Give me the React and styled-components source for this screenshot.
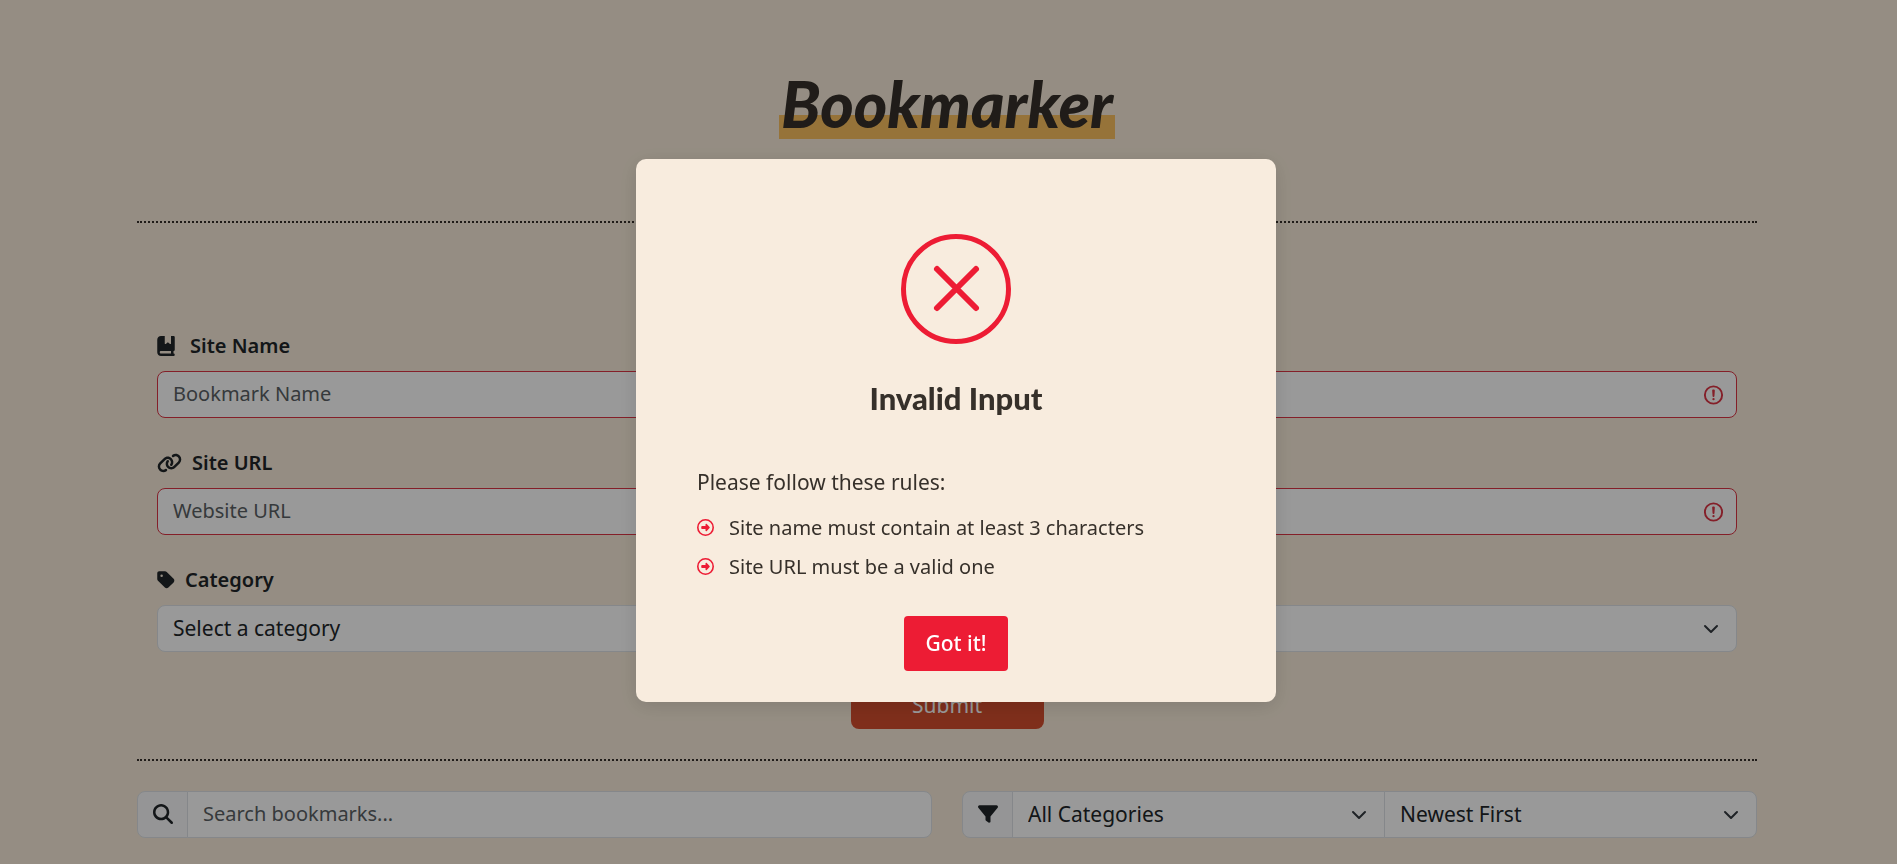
import React from "react";
import styled, { createGlobalStyle } from "styled-components";
import {
  FaBookBookmark,
  FaLink,
  FaTag,
  FaMagnifyingGlass,
  FaFilter,
  FaRegCircleRight,
} from "react-icons/fa6";

const GlobalStyle = createGlobalStyle`
  *, *::before, *::after { box-sizing: border-box; }
  body {
    margin: 0;
    background: #f8ecda;
    color: #212529;
    font-family: "Noto Sans", "Open Sans", sans-serif;
    font-size: 20px;
    line-height: 30px;
  }
  input, select, button { font: inherit; color: inherit; }
`;

const Page = styled.main`
  padding: 63px 140px 24px 137px;
`;

const Header = styled.header`
  display: flex;
  justify-content: center;
  padding-bottom: 82px;
  border-bottom: 2px dotted #36302a;
`;

const Title = styled.h1`
  margin: 0;
  padding: 6px 2px 0;
  font-family: Lato, sans-serif;
  font-size: 64px;
  font-style: italic;
  font-weight: 900;
  line-height: 70px;
  color: #36302a;
  background: linear-gradient(#fbc05f, #fbc05f) bottom / 100% 24px no-repeat;
`;

const Form = styled.form`
  display: flex;
  flex-direction: column;
  gap: 30px;
  padding: 108px 20px 30px;
  border-bottom: 2px dotted #36302a;
`;

const Field = styled.div`
  display: flex;
  flex-direction: column;
  gap: 10px;
`;

const Label = styled.label`
  display: flex;
  align-items: center;
  gap: ${(p) => p.$gap || 10}px;
  font-weight: 600;

  svg {
    width: ${(p) => p.$icon || 18}px;
    height: 20px;
  }
`;

const ControlBox = styled.div`
  position: relative;
  flex: 1;
  min-width: 0;
`;

const controlLook = `
  display: block;
  width: 100%;
  height: 47px;
  margin: 0;
  padding: 0 48px 2px 15px;
  border: 1px solid #dee2e6;
  border-radius: 8px;
  background: #fff;
  outline: none;
`;

const Input = styled.input`
  ${controlLook}
  border-color: ${(p) => (p.$invalid ? "#dc3545" : "#dee2e6")};
  border-radius: ${(p) => (p.$joined ? "0 8px 8px 0" : "8px")};

  &::placeholder {
    color: #5a5f64;
    opacity: 1;
  }
`;

const Select = styled.select`
  ${controlLook}
  appearance: none;
  border-radius: ${(p) => p.$radius || "8px"};
  font-size: 21px;
`;

const Mark = styled.svg`
  position: absolute;
  top: 50%;
  right: ${(p) => p.$right}px;
  width: ${(p) => p.$size}px;
  height: ${(p) => p.$size}px;
  transform: translateY(-50%);
  pointer-events: none;
`;

const SubmitButton = styled.button`
  align-self: center;
  width: 193px;
  height: 47px;
  padding: 0 0 2px;
  border: 0;
  border-radius: 8px;
  background: #d44e2e;
  color: #fff;
  font-size: 21px;
`;

const Toolbar = styled.div`
  display: grid;
  grid-template-columns: 1fr 1fr;
  gap: 30px;
  padding-top: 30px;
`;

const Group = styled.div`
  display: flex;

  > * + * { margin-left: -1px; }
`;

const GroupIcon = styled.span`
  display: flex;
  flex: none;
  align-items: center;
  justify-content: center;
  width: 51px;
  padding-bottom: 2px;
  border: 1px solid #dee2e6;
  border-radius: 8px 0 0 8px;
  background: #f8f9fa;
`;

const Overlay = styled.div`
  position: fixed;
  inset: 0;
  display: flex;
  align-items: center;
  justify-content: center;
  padding: 0 0 3px 15px;
  background: rgba(0, 0, 0, 0.4);
`;

const Dialog = styled.section`
  display: flex;
  flex-direction: column;
  align-items: center;
  width: 640px;
  max-width: 100%;
  padding: 75px 61px 31px;
  border-radius: 10px;
  background: #f8ecde;
  box-shadow: 0 4px 20px rgba(0, 0, 0, 0.12);
  color: #36302a;
`;

const ErrorIcon = styled.svg`
  width: 110px;
  height: 110px;
  fill: none;
  stroke: #ed1c34;
  stroke-width: 5;
  stroke-linecap: round;
`;

const DialogTitle = styled.h2`
  margin: 36px 0 51px;
  font-family: Lato, sans-serif;
  font-size: 31px;
  font-weight: 900;
  line-height: 36px;
`;

const Message = styled.p`
  align-self: stretch;
  margin: 0 0 17px;
  font-size: 21px;
`;

const Rules = styled.ul`
  display: flex;
  flex-direction: column;
  align-self: stretch;
  gap: 12px;
  margin: 0 0 36px;
  padding: 0;
  list-style: none;
`;

const Rule = styled.li`
  display: flex;
  align-items: center;
  gap: 15px;
  line-height: 27px;

  svg {
    flex: none;
    color: #ed1c34;
  }
`;

const ConfirmButton = styled.button`
  width: 104px;
  height: 55px;
  padding: 0 0 2px;
  border: 0;
  border-radius: 4px;
  background: #ed1c34;
  color: #fff;
  font-size: 21px;
  font-weight: 500;
`;

const InvalidMark = () => (
  <Mark $right={12} $size={23} viewBox="0 0 12 12" fill="none" stroke="#dc3545" aria-hidden="true">
    <circle cx="6" cy="6" r="4.5" />
    <path strokeLinejoin="round" d="M5.8 3.6h.4L6 6.5z" />
    <circle cx="6" cy="8.2" r=".6" fill="#dc3545" stroke="none" />
  </Mark>
);

const Chevron = () => (
  <Mark $right={18} $size={16} viewBox="0 0 16 16" fill="none" stroke="#343a40" aria-hidden="true">
    <path strokeLinecap="round" strokeLinejoin="round" strokeWidth="2" d="m2 5 6 6 6-6" />
  </Mark>
);

export default function App() {
  return (
    <>
      <GlobalStyle />
      <Page>
        <Header>
          <Title>Bookmarker</Title>
        </Header>

        <Form onSubmit={(e) => e.preventDefault()}>
          <Field>
            <Label htmlFor="site-name" $gap={15}>
              <FaBookBookmark />
              Site Name
            </Label>
            <ControlBox>
              <Input id="site-name" placeholder="Bookmark Name" $invalid aria-invalid="true" />
              <InvalidMark />
            </ControlBox>
          </Field>
          <Field>
            <Label htmlFor="site-url" $icon={25}>
              <FaLink />
              Site URL
            </Label>
            <ControlBox>
              <Input id="site-url" placeholder="Website URL" $invalid aria-invalid="true" />
              <InvalidMark />
            </ControlBox>
          </Field>
          <Field>
            <Label htmlFor="category">
              <FaTag />
              Category
            </Label>
            <ControlBox>
              <Select id="category">
                <option>Select a category</option>
              </Select>
              <Chevron />
            </ControlBox>
          </Field>
          <SubmitButton type="submit">Submit</SubmitButton>
        </Form>

        <Toolbar>
          <Group>
            <GroupIcon>
              <FaMagnifyingGlass />
            </GroupIcon>
            <ControlBox>
              <Input type="text" aria-label="Search bookmarks" placeholder="Search bookmarks..." $joined />
            </ControlBox>
          </Group>
          <Group>
            <GroupIcon>
              <FaFilter />
            </GroupIcon>
            <ControlBox>
              <Select aria-label="Filter by category" $radius="0">
                <option>All Categories</option>
              </Select>
              <Chevron />
            </ControlBox>
            <ControlBox>
              <Select aria-label="Sort order" $radius="0 8px 8px 0">
                <option>Newest First</option>
              </Select>
              <Chevron />
            </ControlBox>
          </Group>
        </Toolbar>
      </Page>

      <Overlay>
        <Dialog role="dialog" aria-modal="true" aria-labelledby="dialog-title">
          <ErrorIcon viewBox="0 0 110 110" aria-hidden="true">
            <circle cx="55" cy="55" r="52.5" />
            <path strokeWidth="6" d="M36 35l39 39M75 35l-39 39" />
          </ErrorIcon>
          <DialogTitle id="dialog-title">Invalid Input</DialogTitle>
          <Message>Please follow these rules:</Message>
          <Rules>
            <Rule>
              <FaRegCircleRight size={17} />
              Site name must contain at least 3 characters
            </Rule>
            <Rule>
              <FaRegCircleRight size={17} />
              Site URL must be a valid one
            </Rule>
          </Rules>
          <ConfirmButton type="button">Got it!</ConfirmButton>
        </Dialog>
      </Overlay>
    </>
  );
}
